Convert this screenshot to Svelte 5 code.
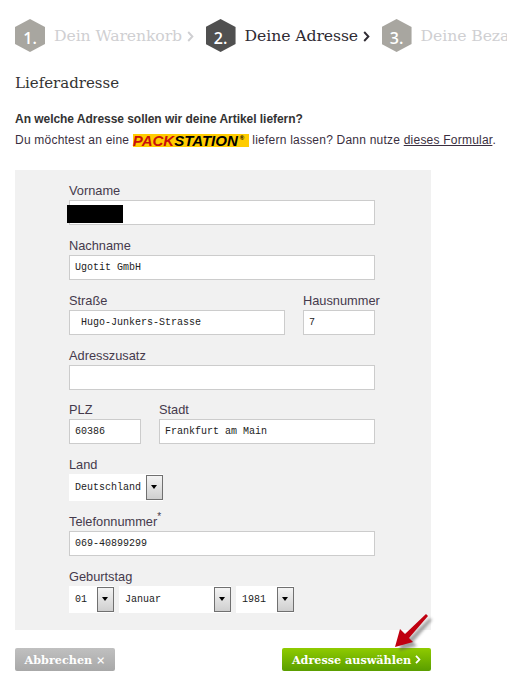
<script>
    const steps = [
        { num: "1.", label: "Dein Warenkorb", chevron: true },
        { num: "2.", label: "Deine Adresse", chevron: true, active: true },
        { num: "3.", label: "Deine Bezahlung", chevron: false }
    ];
</script>

<div class="page">
    <ol class="steps">
        {#each steps as step}
            <li class="step" class:active={step.active}>
                <span class="hex">{step.num}</span>
                <span class="step-label">{step.label}</span>
                {#if step.chevron}
                    <svg class="chev" width="7" height="11" viewBox="0 0 7 11">
                        <path d="M1.2 1 L5.4 5.5 L1.2 10" fill="none" stroke="currentColor" stroke-width="1.9" />
                    </svg>
                {/if}
            </li>
        {/each}
    </ol>

    <h1>Lieferadresse</h1>

    <p class="question">An welche Adresse sollen wir deine Artikel liefern?</p>
    <p class="hint">
        Du möchtest an eine
        <span class="packstation"><b>PACK</b><i>STATION</i><sup>®</sup></span>
        liefern lassen? Dann nutze <a href="#formular">dieses Formular</a>.
    </p>

    <form class="panel">
        <div class="row">
            <label class="field grow redacted">
                <span>Vorname</span>
                <input type="text" value="" />
            </label>
        </div>
        <div class="row">
            <label class="field grow">
                <span>Nachname</span>
                <input type="text" value="Ugotit GmbH" />
            </label>
        </div>
        <div class="row gap18">
            <label class="field grow">
                <span>Straße</span>
                <input class="street" type="text" value="Hugo-Junkers-Strasse" />
            </label>
            <label class="field w72">
                <span>Hausnummer</span>
                <input type="text" value="7" />
            </label>
        </div>
        <div class="row tight">
            <label class="field grow">
                <span>Adresszusatz</span>
                <input type="text" value="" />
            </label>
        </div>
        <div class="row gap18">
            <label class="field w72">
                <span>PLZ</span>
                <input type="text" value="60386" />
            </label>
            <label class="field grow">
                <span>Stadt</span>
                <input type="text" value="Frankfurt am Main" />
            </label>
        </div>
        <div class="row">
            <div class="field">
                <span>Land</span>
                <div class="select w94"><em>Deutschland</em><i class="arrow"></i></div>
            </div>
        </div>
        <div class="row">
            <label class="field grow">
                <span>Telefonnummer<sup class="star">*</sup></span>
                <input type="text" value="069-40899299" />
            </label>
        </div>
        <div class="row last">
            <div class="field">
                <span>Geburtstag</span>
                <div class="selects">
                    <div class="select w45"><em>01</em><i class="arrow"></i></div>
                    <div class="select w112"><em>Januar</em><i class="arrow"></i></div>
                    <div class="select w58"><em>1981</em><i class="arrow"></i></div>
                </div>
            </div>
        </div>
    </form>

    <div class="actions">
        <button type="button" class="btn cancel">Abbrechen ×</button>
        <button type="button" class="btn submit">Adresse auswählen
            <svg width="6" height="9" viewBox="0 0 6 9">
                <path d="M1 0.8 L4.4 4.5 L1 8.2" fill="none" stroke="currentColor" stroke-width="1.8" />
            </svg>
        </button>
        <svg class="pointer" width="33" height="33" viewBox="0 0 33 33">
            <defs>
                <filter id="soft" x="-30%" y="-30%" width="160%" height="160%">
                    <feGaussianBlur stdDeviation="1.6" />
                </filter>
            </defs>
            <path d="M31 0 L33 2 L14 24 L18 28 L0 33 L5 15 L10 20 Z" fill="#555" opacity="0.55" filter="url(#soft)" transform="translate(4 4)" />
            <path d="M31 0 L33 2 L14 24 L18 28 L0 33 L5 15 L10 20 Z" fill="#c00010" />
        </svg>
    </div>
</div>

<style>
    :global(body) {
        background: #fff;
        overflow: hidden;
    }

    .page {
        width: 507px;
        height: 684px;
        overflow: hidden;
        box-sizing: border-box;
        padding: 19px 0 0 15px;
        font-family: "Liberation Sans", Arial, sans-serif;
        font-size: 12px;
        color: #333;
    }

    .steps {
        display: flex;
        list-style: none;
        margin: 0;
        padding: 0;
        white-space: nowrap;
        height: 33px;
    }

    .step {
        display: flex;
        align-items: center;
        flex: none;
        margin-right: 12px;
        color: #cfcfd2;
    }

    .step.active {
        color: #2f2b33;
    }

    .hex {
        width: 30px;
        height: 33px;
        margin-right: 9px;
        display: flex;
        align-items: center;
        justify-content: center;
        padding-top: 4px;
        box-sizing: border-box;
        background: #a8a6a0;
        clip-path: polygon(50% 0, 100% 24%, 100% 76%, 50% 100%, 0 76%, 0 24%);
        color: #fff;
        font-family: "Open Sans", sans-serif;
        font-size: 16px;
        font-weight: 600;
    }

    .active .hex {
        background: #505050;
    }

    .step-label {
        font-family: "DejaVu Serif", serif;
        font-size: 15.7px;
        letter-spacing: -0.1px;
        margin-right: 4.5px;
    }

    .chev {
        margin-top: 1px;
    }

    h1 {
        margin: 21px 0 0;
        font-family: "DejaVu Serif", serif;
        font-weight: normal;
        font-size: 15px;
        line-height: 20px;
        color: #333;
    }

    .question {
        margin: 18px 0 0;
        font-weight: bold;
        line-height: 16px;
        letter-spacing: -0.04px;
    }

    .hint {
        margin: 5px 0 0;
        line-height: 16px;
        white-space: nowrap;
        color: #3a2f40;
        letter-spacing: 0.22px;
    }

    .hint a {
        color: inherit;
        text-decoration: underline;
    }

    .packstation {
        display: inline-block;
        width: 116px;
        height: 13px;
        margin: 0;
        vertical-align: -2px;
        background: #fc0;
        font-family: "Liberation Sans", Arial, sans-serif;
        font-size: 15px;
        font-style: italic;
        font-weight: bold;
        line-height: 13px;
        letter-spacing: 0;
        color: #000;
    }

    .packstation b {
        color: #c8100c;
    }

    .packstation i {
        color: #000;
    }

    .packstation sup {
        font-size: 6px;
        line-height: 0;
        font-style: normal;
        margin-left: 2px;
        vertical-align: 6px;
    }

    .panel {
        width: 416px;
        box-sizing: border-box;
        margin-top: 22px;
        padding: 15px 56px 17px 54px;
        background: #f1f1f1;
    }

    .row {
        display: flex;
        margin-bottom: 15px;
    }

    .row.tight {
        margin-bottom: 14px;
    }

    .row.last {
        margin-bottom: 0;
    }

    .gap18 {
        gap: 18px;
    }

    .field {
        display: flex;
        flex-direction: column;
        min-width: 0;
        position: relative;
    }

    .field > span {
        height: 15px;
        line-height: 12px;
        font-size: 12.8px;
        color: #453a4c;
        white-space: nowrap;
    }

    .star {
        font-size: 10px;
        line-height: 0;
        vertical-align: 6px;
    }

    .grow {
        flex: 1;
    }

    .w72 {
        width: 72px;
        flex: none;
    }

    input {
        width: 100%;
        height: 25px;
        box-sizing: border-box;
        border: 1px solid #ccc;
        border-radius: 0;
        padding: 0 5px;
        background: #fff;
        font-family: "Liberation Mono", "Courier New", monospace;
        font-size: 10px;
        color: #222;
        outline: none;
    }

    input.street {
        padding-left: 11px;
    }

    .redacted::after {
        content: "";
        position: absolute;
        left: -2px;
        top: 20px;
        width: 56px;
        height: 18px;
        background: #000;
    }

    .selects {
        display: flex;
        gap: 5px;
    }

    .select {
        height: 27px;
        box-sizing: border-box;
        display: flex;
        align-items: center;
        justify-content: space-between;
        padding: 1px 0 1px 6px;
        background: #fff;
        font-family: "Liberation Mono", "Courier New", monospace;
        font-size: 10px;
        color: #222;
    }

    .select em {
        font-style: normal;
    }

    .w94 { width: 94px; }
    .w45 { width: 45px; }
    .w112 { width: 112px; }
    .w58 { width: 58px; }

    .arrow {
        position: relative;
        flex: none;
        width: 17px;
        height: 25px;
        box-sizing: border-box;
        border: 1px solid #707070;
        background: linear-gradient(#f4f4f4, #cfcfcf);
    }

    .arrow::after {
        content: "";
        position: absolute;
        left: 4px;
        top: 9px;
        border-style: solid;
        border-width: 4px 3.5px 0;
        border-color: #000 transparent transparent;
    }

    .actions {
        position: relative;
        width: 416px;
        margin-top: 18px;
        display: flex;
        justify-content: space-between;
    }

    .btn {
        height: 23px;
        border: 0;
        border-radius: 2px;
        padding: 0;
        font-family: "DejaVu Serif", serif;
        font-weight: bold;
        font-size: 11.2px;
        color: #fff;
    }

    .cancel {
        width: 100px;
        background: linear-gradient(#c0c0c0, #a8a8a8);
    }

    .submit {
        width: 149px;
        background: linear-gradient(#8fcb00, #5a9e00);
    }

    .pointer {
        position: absolute;
        right: 3px;
        top: -34px;
        overflow: visible;
    }
</style>
